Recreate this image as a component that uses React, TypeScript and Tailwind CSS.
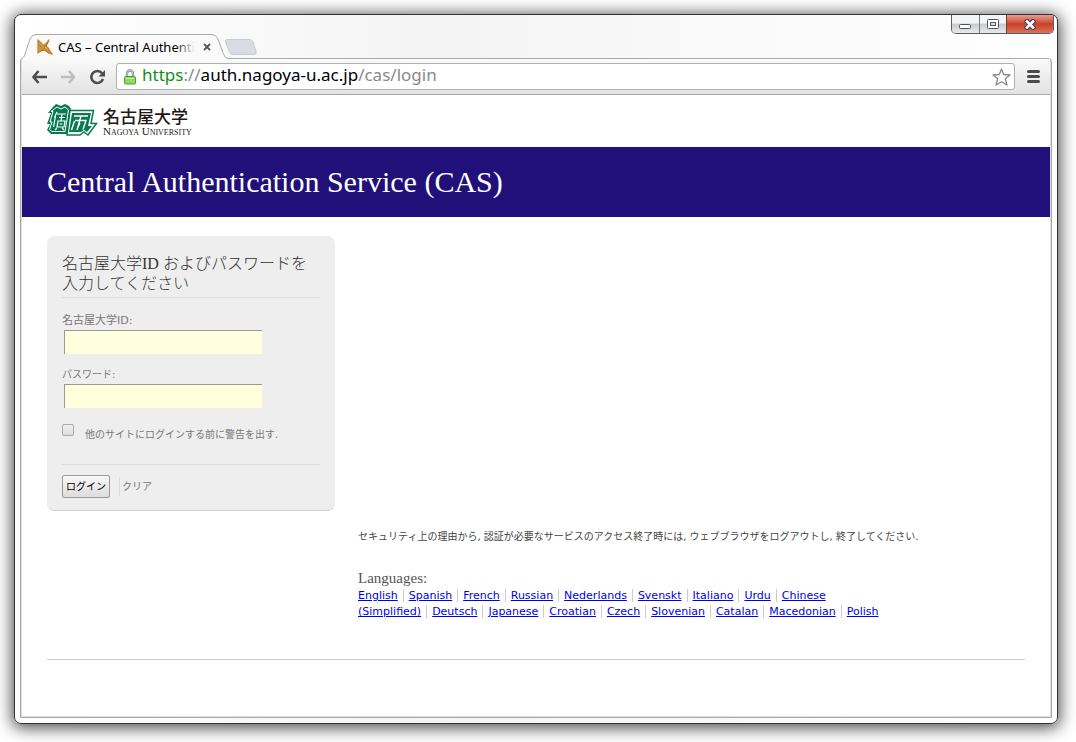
import React, { useState } from 'react';

const languageRows = [
    'English', 'Spanish', 'French', 'Russian', 'Nederlands', 'Svenskt', 'Italiano', 'Urdu',
    'Chinese (Simplified)', 'Deutsch', 'Japanese', 'Croatian', 'Czech', 'Slovenian',
    'Catalan', 'Macedonian', 'Polish'
];

const WindowButtons: React.FC = () => (
    <div className="ml-auto mr-[3px] flex h-[19px] self-start overflow-hidden rounded-b-[5px] border border-t-0 border-[#5b5e66]">
        <button type="button" aria-label="Minimize" className="flex w-7 items-center justify-center border-r border-[#777a82] bg-linear-to-b from-[#f4f4f5] from-45% via-[#c9cacd] via-50% to-[#e8e9eb]">
            <svg width="13" height="7" viewBox="0 0 13 7" className="mt-1">
                <rect x="0.5" y="1.5" width="11" height="4" rx="1" fill="#fff" stroke="#50526a" />
            </svg>
        </button>
        <button type="button" aria-label="Maximize" className="flex w-[27px] items-center justify-center border-r border-[#7b3a35] bg-linear-to-b from-[#f4f4f5] from-45% via-[#c9cacd] via-50% to-[#e8e9eb]">
            <svg width="12" height="10" viewBox="0 0 12 10">
                <rect x="0.5" y="0.5" width="11" height="9" rx="1" fill="#fff" stroke="#50526a" />
                <rect x="3.5" y="3.5" width="5" height="3" fill="#dcdde0" stroke="#50526a" />
            </svg>
        </button>
        <button type="button" aria-label="Close window" className="flex w-[46px] items-center justify-center bg-linear-to-b from-[#ea9c8c] from-0% via-[#c8402a] via-50% to-[#dd7258]">
            <svg width="12" height="11" viewBox="0 0 12 11">
                <path d="M3 2.5 9 8.5M9 2.5 3 8.5" stroke="#4d4658" strokeWidth="5" strokeLinecap="square" />
                <path d="M3 2.5 9 8.5M9 2.5 3 8.5" stroke="#fff" strokeWidth="2.6" strokeLinecap="square" />
            </svg>
        </button>
    </div>
);

const TabStrip: React.FC = () => (
    <div className="flex h-[43px] items-end pl-[5px]">
        <div className="relative z-10 -mb-px flex h-[25px] w-[208px] items-center pl-[17px]">
            <svg className="absolute inset-0" width="208" height="26" viewBox="0 0 208 26">
                <path d="M0 26C3 24 4 23 5 20L10 5Q12 .5 16 .5H192Q196 .5 198 5L203 19Q205 24.5 208 24.5V26Z" fill="#fafafa" />
                <path d="M0 26C3 24 4 23 5 20L10 5Q12 .5 16 .5H192Q196 .5 198 5L203 19Q205 24.5 208 24.5" fill="none" stroke="#aaa" />
            </svg>
            <svg className="relative shrink-0" width="16" height="16" viewBox="0 0 16 16" fill="none" stroke="#c8892f" strokeLinecap="round" strokeLinejoin="round">
                <path d="M1 1 7 7 5 11 1 14Z" fill="#d09a4c" stroke="none" />
                <path d="M1 1v13M1 1l6 6M1 5l4 4M1 14l5-4" strokeWidth="1.4" />
                <path d="M12 1 7 8l2 4M12 1 9 7l3 3M8 5l-2 6M7 8l5 6 3 1M9 7l6 8M5 11l4-1 4 4" strokeWidth="1.4" />
                <path d="M11 3 8 8M4 12l4-1 3 3" stroke="#9c6a1f" strokeWidth=".8" />
            </svg>
            <span className="relative ml-[5px] w-[137px] overflow-hidden whitespace-nowrap font-['Noto_Sans',sans-serif] text-[13px] leading-4 text-black">
                CAS – Central Authentication
                <span className="absolute inset-y-0 right-0 w-5 bg-linear-to-r from-transparent to-[#fafafa]" />
            </span>
            <button type="button" aria-label="Close tab" className="relative ml-2">
                <svg width="8" height="8" viewBox="0 0 8 8" stroke="#555" strokeWidth="1.8">
                    <path d="M1 1 7 7M7 1 1 7" />
                </svg>
            </button>
        </div>
        <button type="button" aria-label="New tab" className="-ml-[4px] mb-[2px]">
            <svg width="34" height="18" viewBox="0 0 34 18">
                <path d="M3 1.5H25Q28 1.5 29 4L32 13Q33 16.5 30 16.5H9Q6 16.5 5 13L1.5 4Q1 1.5 3 1.5Z" fill="#d8dde5" stroke="#c8cace" />
            </svg>
        </button>
        <WindowButtons />
    </div>
);

const Toolbar: React.FC<{ url: React.ReactNode }> = ({ url }) => (
    <div className="flex h-9 items-center border-b border-[#a9a9a9] bg-linear-to-b from-[#fafafa] to-[#e2e2e2] pl-[9px] pr-[10px]">
        <button type="button" aria-label="Back">
            <svg width="17" height="14" viewBox="0 0 17 14" fill="none" stroke="#4d4d4d" strokeWidth="2.6">
                <path d="M7.5 1 2.5 7l5 6M2.5 7H16" />
            </svg>
        </button>
        <button type="button" aria-label="Forward" className="ml-3">
            <svg width="17" height="14" viewBox="0 0 17 14" fill="none" stroke="#bdbdbd" strokeWidth="2.4">
                <path d="M9 1l5 6-5 6M14 7H1" />
            </svg>
        </button>
        <button type="button" aria-label="Reload" className="ml-3">
            <svg width="17" height="16" viewBox="0 0 17 16">
                <path d="M13 4.2A6 6 0 1 0 14 10" fill="none" stroke="#4d4d4d" strokeWidth="2.6" />
                <path d="M16 1v6.5H9.5Z" fill="#4d4d4d" />
            </svg>
        </button>
        <div className="ml-[10px] flex h-[27px] flex-1 items-center rounded-[3px] border border-[#b0b0b0] bg-white pl-[7px] pr-[3px]">
            <svg width="12" height="16" viewBox="0 0 12 16">
                <path d="M3 8V4.5a3 3 0 0 1 6 0V8" fill="none" stroke="#888" strokeWidth="2.4" />
                <path d="M3 8V4.5a3 3 0 0 1 6 0V8" fill="none" stroke="#ddd" strokeWidth=".8" />
                <rect x=".5" y="7.5" width="11" height="7.5" rx="1" fill="#91d966" stroke="#4e9c37" />
                <path d="M2 9.5h8" stroke="#c5f0a8" />
            </svg>
            <div className="ml-[6px] flex-1 whitespace-nowrap pb-[3px] font-['Noto_Sans',sans-serif] text-[17px] leading-6 text-[#8a8a8a]">
                {url}
            </div>
            <button type="button" aria-label="Bookmark this page">
                <svg width="19" height="18" viewBox="0 0 19 18" fill="#fff" stroke="#888" strokeWidth="1.3" strokeLinejoin="round">
                    <path d="M9.5 1 11.7 6.5 18 7 13.3 10.7 15 17 9.5 13.7 4 17l1.7-6.3L1 7l6.3-.5Z" />
                </svg>
            </button>
        </div>
        <button type="button" aria-label="Menu" className="ml-3">
            <svg width="13" height="13" viewBox="0 0 13 13" stroke="#4a4a4a" strokeWidth="3" strokeLinecap="round">
                <path d="M1.5 1.5h10M1.5 6.5h10M1.5 11.5h10" />
            </svg>
        </button>
    </div>
);

const UniversityLogo: React.FC = () => (
    <div className="flex items-center">
        <svg width="52" height="34" viewBox="0 0 52 34" fill="none">
            {/* left mark */}
            <path d="M6 3 9 0l5 2 4-2 4 2 2 3-1 6-3 19H4L0 26l3-6H0L4 9H1Z" fill="#087a50" />
            <path d="M4 7.5h2l-3 10.500h2L2.500 25.500 5 27.500h13L21.500 6 18 3l-4 2-4-2Z" stroke="#fff" />
            <path d="M10 8 7.500 13.500M8.500 12 6.500 23M10 10h9M12 13.500h6M15 10l-1 7M11 17h7l-1 6h-7ZM12.500 20h3M10 24l-2 2M15 24l2 2" stroke="#fff" strokeWidth="1.200" />
            {/* right mark */}
            <path d="M23 6.500h23.500L44 19.500h5.500L41 31l-4-3-4 3H20Z" fill="#fff" stroke="#087a50" strokeWidth="1.500" />
            <path d="M25 9h19l-3 13h4l-5 6-3-2-3 2H22Z" fill="#087a50" />
            <path d="M27 12h14M34 12l-4 14M27.500 17l-3 9M28 16.500h11l-3 9M33 19l-2 4" stroke="#fff" strokeWidth="1.400" />
        </svg>
        <div className="ml-1 text-[#231815]">
            <div className="font-['Noto_Sans_CJK_JP',sans-serif] text-[17px] font-medium leading-5">名古屋大学</div>
            <div className="whitespace-nowrap font-['Liberation_Serif',serif] text-[11px] leading-[10px] [font-variant:small-caps]">Nagoya University</div>
        </div>
    </div>
);

const LoginForm: React.FC = () => {
    const [userId, setUserId] = useState('');
    const [password, setPassword] = useState('');
    const [warn, setWarn] = useState(false);

    const clearForm = () => {
        setUserId('');
        setPassword('');
        setWarn(false);
    };

    return (
        <form
            onSubmit={(e) => e.preventDefault()}
            className="w-72 rounded-lg border-b border-[#ccd2d2] bg-[#eee] px-[15px] pb-3 pt-[18px] text-[10px] text-[#777]"
        >
            <h2 className="border-b border-[#ddd] pb-[3px] font-['Liberation_Serif','Noto_Sans_CJK_JP',serif] text-[16px] font-light leading-5 text-[#333]">
                名古屋大学ID およびパスワードを<br />入力してください
            </h2>

            <label htmlFor="username" className="mt-[15px] block text-[11px] leading-4">名古屋大学ID:</label>
            <input
                id="username"
                type="text"
                value={userId}
                onChange={(e) => setUserId(e.target.value)}
                className="ml-[2px] mt-px block h-6 w-[198px] border-l border-t border-[#999] bg-[#ffd] px-1 text-xs outline-none"
            />

            <label htmlFor="password" className="mt-[13px] block leading-4">パスワード:</label>
            <input
                id="password"
                type="password"
                value={password}
                onChange={(e) => setPassword(e.target.value)}
                className="ml-[2px] mt-px block h-6 w-[198px] border-l border-t border-[#999] bg-[#ffd] px-1 text-xs outline-none"
            />

            <div className="mt-4 flex items-start border-b border-[#ddd] pb-[21px]">
                <input
                    id="warn"
                    type="checkbox"
                    checked={warn}
                    onChange={(e) => setWarn(e.target.checked)}
                    className="size-3 appearance-none rounded-[2px] border border-[#aaa] bg-linear-to-b from-[#f0f0f0] to-[#dcdcdc] checked:bg-[#777]"
                />
                <label htmlFor="warn" className="ml-[11px] mt-[3px] leading-4">他のサイトにログインする前に警告を出す.</label>
            </div>

            <div className="mt-[10px] flex items-center">
                <button type="submit" className="h-[23px] w-12 rounded-[2px] border border-[#999] bg-linear-to-b from-[#f8f8f8] to-[#ddd] text-black">
                    ログイン
                </button>
                <button type="button" onClick={clearForm} className="ml-[9px] h-[19px] border-l border-[#ddd] pl-[2px] text-[#777]">
                    クリア
                </button>
            </div>
        </form>
    );
};

const App: React.FC = () => {
    return (
        <div className="flex min-h-screen bg-white pb-[18px] pl-[14px] pr-[18px] pt-[14px] font-['DejaVu_Sans','Noto_Sans_CJK_JP',sans-serif]">
            {/* Browser window */}
            <div className="flex flex-1 flex-col rounded-[7px] border border-[#333] bg-linear-to-r from-white via-[#f4f4f4] via-40% to-white shadow-[0_2px_16px_2px_rgba(0,0,0,0.7)]">
                <TabStrip />
                <div className="mx-[5px] mb-[5px] flex flex-1 flex-col overflow-hidden rounded-t-[4px] border border-[#aaa] bg-[#ddd] px-px pb-px">
                    <Toolbar
                        url={<><span className="text-[#0c9212]">https</span>://<span className="text-black">auth.nagoya-u.ac.jp</span>/cas/login</>}
                    />

                    {/* Page */}
                    <div className="flex-1 bg-white">
                        <header>
                            <div className="flex h-[52px] items-center px-[25px]">
                                <UniversityLogo />
                            </div>
                            <h1 className="bg-[#210f7a] px-[25px] py-[17px] font-['Liberation_Serif',serif] text-[30px] leading-9 text-white">
                                Central Authentication Service (CAS)
                            </h1>
                        </header>
                        <main className="mx-[25px] border-b border-[#ccc] pb-[39px] pt-[19px]">
                            <LoginForm />
                            <div className="ml-[311px] mt-[18px]">
                                <p className="text-[10px] leading-4 text-[#444]">
                                    セキュリティ上の理由から, 認証が必要なサービスのアクセス終了時には, ウェブブラウザをログアウトし, 終了してください.
                                </p>
                                <h3 className="mt-[23px] font-['Liberation_Serif',serif] text-[15px] leading-5 text-[#555]">Languages:</h3>
                                <ul className="max-w-[530px] text-[11px] leading-4">
                                    {languageRows.map((language, i) => (
                                        <React.Fragment key={language}>
                                            <li className={i < languageRows.length - 1 ? 'mr-[5px] inline border-r border-[#ccc] pr-[5px]' : 'inline'}>
                                                <a href="#" className="text-[#00e] underline">{language}</a>
                                            </li>
                                            <wbr />
                                        </React.Fragment>
                                    ))}
                                </ul>
                            </div>
                        </main>
                    </div>
                </div>
            </div>
        </div>
    );
};

export default App;
